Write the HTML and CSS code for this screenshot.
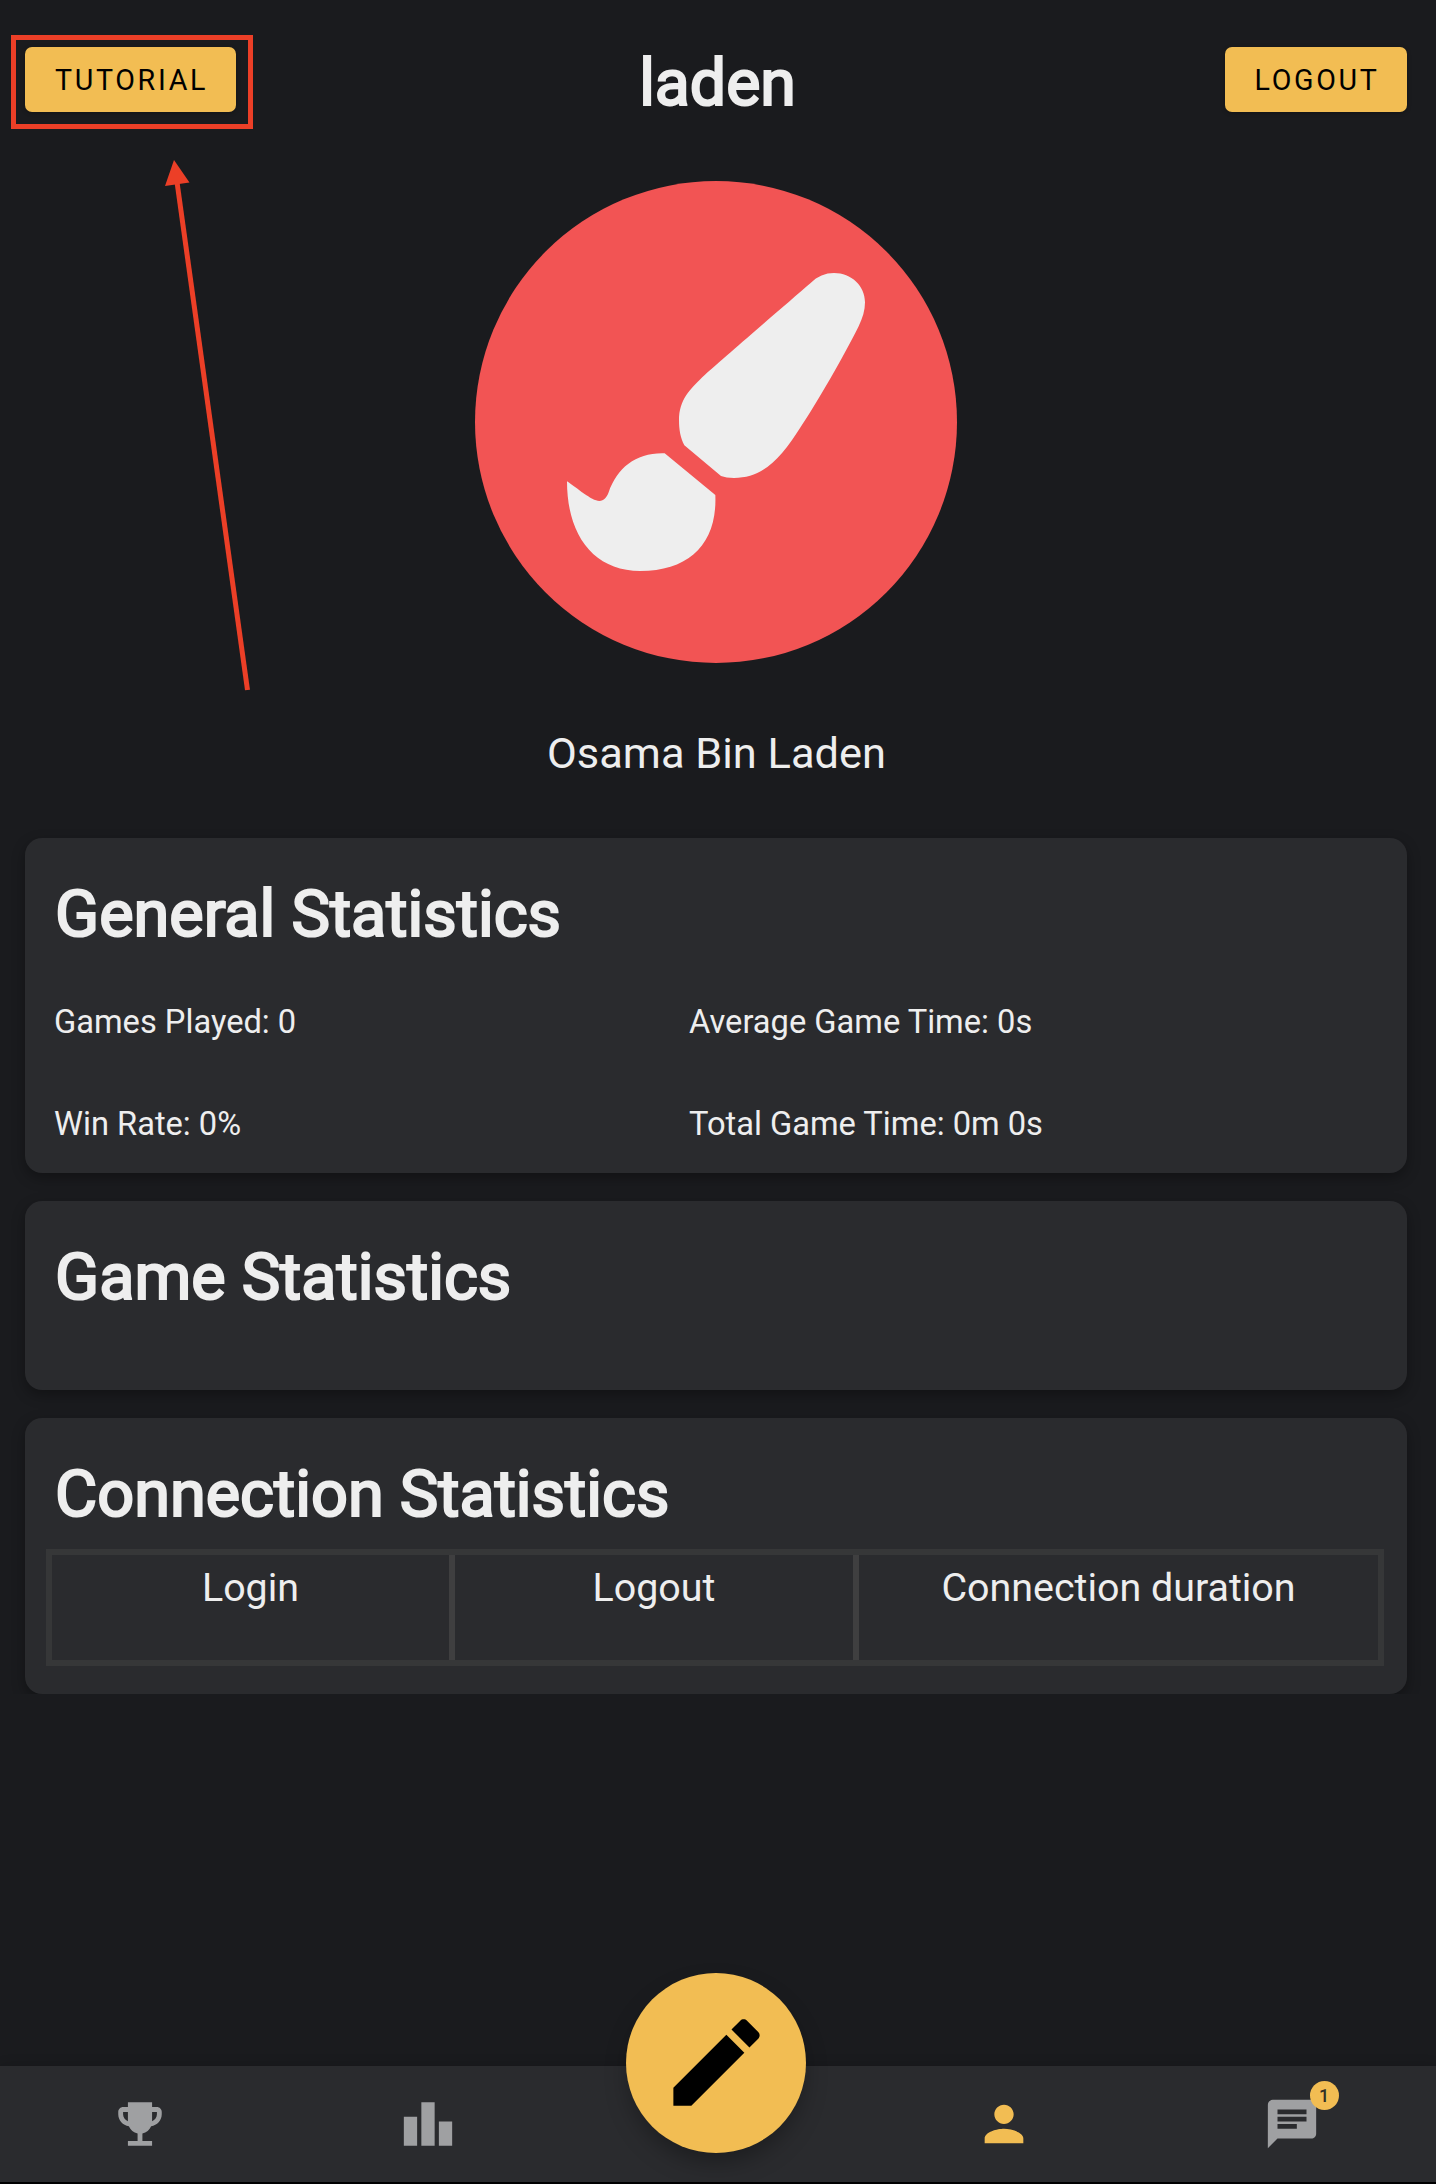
FILE: index.html
```html
<!DOCTYPE html>
<html lang="en">
<head>
<meta charset="utf-8">
<title>Profile</title>
<link rel="stylesheet" href="styles.css">
</head>
<body>
<div class="app">
  <header class="header">
    <div class="side"><button class="btn btn-tutorial">TUTORIAL</button></div>
    <h1 class="title">laden</h1>
    <div class="side side-end"><button class="btn btn-logout">LOGOUT</button></div>
  </header>

  <section class="profile">
    <svg class="avatar" viewBox="45 34 1446 1446">
      <circle cx="768" cy="757" r="723" fill="#f25454"/>
      <path fill="#eee" d="M1052 340C1072 320 1096 310 1122 310C1174 310 1215 348 1215 398C1215 422 1208 445 1196 470C1150 562 1068 705 1022 772C965 862 912 925 822 925C806 925 794 923 783 919L673 827C661 805 657 780 657 752C657 690 690 657 735 615C800 557 980 402 1052 340Z"/>
      <path fill="#eee" d="M614 851L766 976C772 1120 690 1204 541 1204C400 1204 321 1095 321 935C350 954 395 994 418 994C432 994 440 984 446 968C472 893 530 848 614 851Z"/>
    </svg>
    <p class="name">Osama Bin Laden</p>
  </section>

  <main class="cards">
    <section class="card card-general">
      <h2 class="heading">General Statistics</h2>
      <div class="stats">
        <span>Games Played: 0</span>
        <span>Average Game Time: 0s</span>
        <span>Win Rate: 0%</span>
        <span>Total Game Time: 0m 0s</span>
      </div>
    </section>
    <section class="card card-game">
      <h2 class="heading">Game Statistics</h2>
    </section>
    <section class="card card-connection">
      <h2 class="heading">Connection Statistics</h2>
      <div class="table">
        <div class="cell">Login</div>
        <div class="cell">Logout</div>
        <div class="cell">Connection duration</div>
      </div>
    </section>
  </main>

  <nav class="nav">
    <a class="tab"><svg class="icon" viewBox="0 0 24 24"><path d="M19 5h-2V3H7v2H5c-1.1 0-2 .9-2 2v1c0 2.55 1.92 4.63 4.39 4.94.63 1.5 1.98 2.63 3.61 2.96V19H7v2h10v-2h-4v-3.1c1.63-.33 2.98-1.46 3.61-2.96C19.08 12.63 21 10.55 21 8V7c0-1.1-.9-2-2-2zM5 8V7h2v3.82C5.84 10.4 5 9.3 5 8zm14 0c0 1.3-.84 2.4-2 2.82V7h2v1z"/></svg></a>
    <a class="tab"><svg class="icon" viewBox="0 0 24 24"><path d="M7.5 21H2V9h5.5v12zm7.25-18h-5.5v18h5.5V3zM22 11h-5.5v10H22V11z"/></svg></a>
    <a class="tab"></a>
    <a class="tab tab-active"><svg class="icon" viewBox="0 0 24 24"><path d="M12 12c2.21 0 4-1.79 4-4s-1.79-4-4-4-4 1.79-4 4 1.79 4 4 4zm0 2c-2.67 0-8 1.34-8 4v2h16v-2c0-2.66-5.33-4-8-4z"/></svg></a>
    <a class="tab"><span class="badged"><svg class="icon" viewBox="0 0 24 24"><path d="M20 2H4c-1.1 0-1.99.9-1.99 2L2 22l4-4h14c1.1 0 2-.9 2-2V4c0-1.1-.9-2-2-2zM6 9h12v2H6V9zm8 5H6v-2h8v2zm4-6H6V6h12v2z"/></svg><span class="badge">1</span></span></a>
    <button class="fab"><svg class="pencil" viewBox="0 0 24 24"><path d="M3 17.25V21h3.75L17.81 9.94l-3.75-3.75L3 17.25zM20.71 7.04c.39-.39.39-1.02 0-1.41l-2.34-2.34c-.39-.39-1.02-.39-1.41 0l-1.83 1.83 3.75 3.75 1.83-1.83z"/></svg></button>
  </nav>

  <div class="callout"></div>
  <svg class="arrow" viewBox="0 0 100 540">
    <path d="M27 22L97.500 530" fill="none" stroke="#ec3f27" stroke-width="5"/>
    <path d="M24 0L39.500 22.500L15 26Z" fill="#ec3f27"/>
  </svg>
</div>
</body>
</html>
```
FILE: styles.css
```css
* { box-sizing: border-box; }

body {
  margin: 0;
  background: #1a1b1e;
  color: #eee;
  font-family: Roboto, "Liberation Sans", sans-serif;
}

.app {
  position: relative;
  display: flex;
  flex-direction: column;
  width: 1436px;
  height: 2184px;
  padding-right: 4px;
  border-bottom: 2px solid #000;
  overflow: hidden;
}

.header {
  display: grid;
  grid-template-columns: 1fr auto 1fr;
  align-items: center;
  height: 158px;
  padding: 0 25px;
}

.side { display: flex; }
.side-end { justify-content: flex-end; }

.btn {
  height: 65px;
  padding: 1px 0 0 2px;
  border: 0;
  border-radius: 7px;
  background: #f2bd53;
  color: #000;
  font: 400 28.6px/64px Roboto, "Liberation Sans", sans-serif;
  letter-spacing: 2.7px;
  box-shadow: 0 1px 4px rgba(0, 0, 0, .3);
}
.btn-tutorial { width: 211px; }
.btn-logout { width: 182px; }

.title,
.heading {
  margin: 0;
  font-weight: 400;
  font-size: 64.8px;
  line-height: 80px;
  -webkit-text-stroke: 2.2px #eee;
}
.title { padding: 8px 0 0 3px; font-size: 64.4px; }

.profile {
  display: flex;
  flex-direction: column;
  align-items: center;
  height: 666px;
  padding-top: 23px;
}
.avatar { display: block; width: 482px; height: 482px; }
.name {
  margin: 65px 0 0;
  padding-left: 1px;
  font-size: 43.4px;
  line-height: 52px;
}

.cards {
  display: flex;
  flex-direction: column;
  gap: 28.4px;
  padding: 13.500px 25px 0;
  overflow: hidden;
  flex: none;
}
.card {
  border-radius: 17px;
  background: #2a2b2e;
  box-shadow: 0 5px 14px rgba(0, 0, 0, .32);
}
.card-general { height: 335px; padding: 36px 29px 0; }
.card-game { height: 189.200px; padding: 36px 29px 0; }
.card-connection { height: 275.700px; padding: 36px 23px 0 21px; }
.heading { padding-left: 1px; }
.card-connection .heading { padding-left: 9px; }

.stats {
  display: grid;
  grid-template-columns: 635px 1fr;
  grid-auto-rows: 102px;
  padding-top: 17px;
  font-size: 32.65px;
  line-height: 102px;
}

.table {
  display: grid;
  grid-template-columns: 409px 404px 1fr;
  height: 117px;
  margin-top: 15px;
  border: solid #363738;
  border-width: 6px 0;
}
.cell {
  padding-top: 10px;
  border-right: 6px solid #3f3f40;
  font-size: 39.4px;
  line-height: 46px;
  text-align: center;
}
.cell:first-child { border-left: 6px solid #363738; }
.cell:last-child { border-right-color: #363738; }

.nav {
  position: relative;
  display: grid;
  grid-template-columns: repeat(5, 288px);
  justify-content: center;
  height: 116px;
  margin: auto -4px 0 0;
  padding-right: 4px;
  background: #2a2b2e;
  box-shadow: 0 -2px 10px rgba(0, 0, 0, .12);
}
.tab {
  display: flex;
  align-items: center;
  justify-content: center;
  color: #9fa0a2;
}
.tab-active { color: #f2bd53; }
.icon { display: block; width: 58px; height: 58px; fill: currentColor; }
.badged { position: relative; }
.badge {
  position: absolute;
  left: 46.500px;
  top: -14px;
  width: 29px;
  height: 29px;
  border-radius: 50%;
  background: #f2bd53;
  color: #333026;
  font-size: 18px;
  font-weight: 500;
  line-height: 29px;
  text-align: center;
}

.fab {
  position: absolute;
  left: 626px;
  top: -93.500px;
  display: flex;
  align-items: center;
  justify-content: center;
  width: 180px;
  height: 180px;
  padding: 0;
  border: 0;
  border-radius: 50%;
  background: #f2bd53;
  box-shadow: 0 12px 24px -4px rgba(0, 0, 0, .35);
}
.pencil { width: 115px; height: 115px; fill: #000; }

/* Annotation drawn over the page */
.callout {
  position: absolute;
  left: 11px;
  top: 35px;
  width: 242px;
  height: 94px;
  border: 5px solid #ec3f27;
}
.arrow {
  position: absolute;
  left: 150px;
  top: 160px;
  width: 100px;
  height: 540px;
}
```
